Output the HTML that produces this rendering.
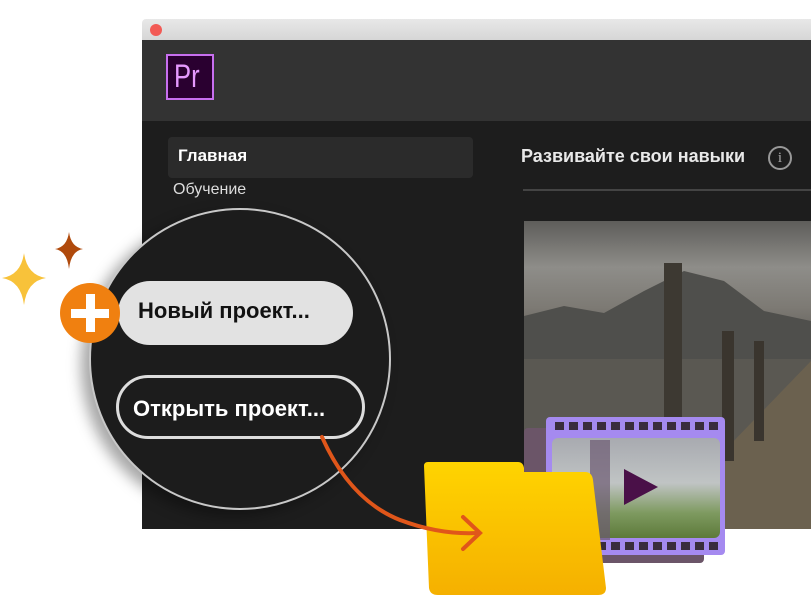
<!DOCTYPE html>
<html><head><meta charset="utf-8"><style>
*{margin:0;padding:0;box-sizing:border-box}
body{width:811px;height:597px;background:#fff;position:relative;overflow:hidden;font-family:"Liberation Sans",sans-serif}
.abs{position:absolute}
</style></head><body>
<div class="abs" style="left:142px;top:19px;width:669px;height:21px;background:linear-gradient(#e8e8e8,#d6d6d6);border-radius:4px 0 0 0"></div>
<div class="abs" style="left:150px;top:24px;width:12px;height:12px;border-radius:50%;background:#f25a55"></div>
<div class="abs" style="left:142px;top:40px;width:669px;height:81px;background:#333"></div>
<div class="abs" style="left:166px;top:54px;width:48px;height:46px;border:2px solid #c86ff0;background:#2a0030"></div>
<div class="abs" style="left:174px;top:58px;color:#e699ff;font-size:32px;line-height:36px;transform:scaleX(.8);transform-origin:left">Pr</div>
<div class="abs" style="left:142px;top:121px;width:669px;height:408px;background:#1d1d1d"></div>
<div class="abs" style="left:168px;top:137px;width:305px;height:41px;background:#2b2b2b;border-radius:4px"></div>
<div class="abs" style="left:178px;top:146px;color:#fff;font-size:17px;font-weight:bold">Главная</div>
<div class="abs" style="left:173px;top:181px;color:#ddd;font-size:16px">Обучение</div>
<div class="abs" style="left:521px;top:146px;color:#e8e8e8;font-size:18px;font-weight:bold">Развивайте свои навыки</div>
<div class="abs" style="left:768px;top:146px;width:24px;height:24px;border:2px solid #999;border-radius:50%;color:#aaa;font-size:15px;text-align:center;line-height:20px;font-family:'Liberation Serif',serif">i</div>
<div class="abs" style="left:523px;top:189px;width:288px;height:2px;background:#444"></div>
<div class="abs" style="left:524px;top:221px;width:287px;height:308px;background:linear-gradient(#5e5d5a 0%,#8e8d89 15%,#7d7a74 28%,#5f5d58 40%,#56544e 55%,#4f4a40 100%)"></div>
<svg class="abs" style="left:524px;top:221px" width="287" height="308"><path d="M0 95 L40 85 L80 92 L120 70 L160 50 L200 60 L240 90 L287 100 L287 140 L0 140Z" fill="#4f4f4c"/><rect x="0" y="138" width="287" height="170" fill="#5a5852"/><path d="M150 330 L200 230 L287 140 L287 308 L160 308Z" fill="#6b614f"/><rect x="140" y="42" width="18" height="200" fill="#3d3932"/><rect x="198" y="110" width="12" height="130" fill="#3a352e"/><rect x="230" y="120" width="10" height="100" fill="#3a352e"/></svg>
<!-- magnifier -->
<div class="abs" style="left:89px;top:208px;width:302px;height:302px;border-radius:50%;background:#1c1c1c;border:2px solid #c8c8c8;box-shadow:-8px 6px 14px rgba(0,0,0,.35)"></div>
<div class="abs" style="left:118px;top:281px;width:235px;height:64px;border-radius:32px;background:#e2e2e2"></div>
<div class="abs" style="left:138px;top:298px;color:#111;font-size:22px;font-weight:bold">Новый проект...</div>
<div class="abs" style="left:60px;top:283px;width:60px;height:60px;border-radius:50%;background:#f08010"></div>
<div class="abs" style="left:71px;top:309px;width:38px;height:9px;background:#fff"></div>
<div class="abs" style="left:86px;top:294px;width:9px;height:38px;background:#fff"></div>
<div class="abs" style="left:116px;top:375px;width:249px;height:64px;border-radius:32px;border:3px solid #ddd"></div>
<div class="abs" style="left:133px;top:396px;color:#fff;font-size:22px;font-weight:bold">Открыть проект...</div>
<svg class="abs" style="left:0;top:225px" width="100" height="90"><path d="M24 28 Q27 50 46 53 Q27 56 24 80 Q21 56 2 53 Q21 50 24 28Z" fill="#f8c23a"/><path d="M69 7 Q71 22 83 24 Q71 26 69 44 Q67 26 55 24 Q67 22 69 7Z" fill="#b04a0c"/></svg>
<!-- film -->
<div class="abs" style="left:524px;top:428px;width:180px;height:135px;background:#6b5568;border-radius:4px"></div>
<div class="abs" style="left:546px;top:417px;width:179px;height:138px;background:#a58af0;border-radius:4px"></div>
<div class="abs" style="left:552px;top:438px;width:168px;height:100px;border-radius:6px;background:linear-gradient(#a8aab0,#c0c4c4 45%,#7e9a60 75%,#5d7a3a)"></div>
<div class="abs" style="left:555px;top:422px;width:168px;height:8px;background:repeating-linear-gradient(90deg,#3a2d3c 0 9px,transparent 9px 14px)"></div>
<div class="abs" style="left:555px;top:542px;width:168px;height:8px;background:repeating-linear-gradient(90deg,#3a2d3c 0 9px,transparent 9px 14px)"></div>
<div class="abs" style="left:590px;top:440px;width:20px;height:100px;background:#6c5a72;opacity:.7"></div>
<svg class="abs" style="left:620px;top:465px" width="42" height="45"><path d="M4 4 L38 22 L4 40Z" fill="#4a1048"/></svg>
<!-- folder -->
<svg class="abs" style="left:410px;top:460px" width="200" height="137"><defs><linearGradient id="g" x1="0" y1="0" x2="0" y2="1"><stop offset="0" stop-color="#ffd400"/><stop offset="1" stop-color="#f5b000"/></linearGradient></defs><path d="M14 6 Q14 2 18 2 L108 2 Q113 2 114 8 L114 12 L175 12 Q182 12 183 20 L196 128 Q196 135 188 135 L28 135 Q20 135 19 128Z" fill="url(#g)"/></svg>
<svg class="abs" style="left:0;top:0" width="811" height="597"><path d="M322 437 Q350 500 400 520 Q440 535 478 533" fill="none" stroke="#e0561a" stroke-width="4" stroke-linecap="round"/><path d="M463 517 L480 533 L463 549" fill="none" stroke="#e0561a" stroke-width="4" stroke-linecap="round"/></svg>
</body></html>
